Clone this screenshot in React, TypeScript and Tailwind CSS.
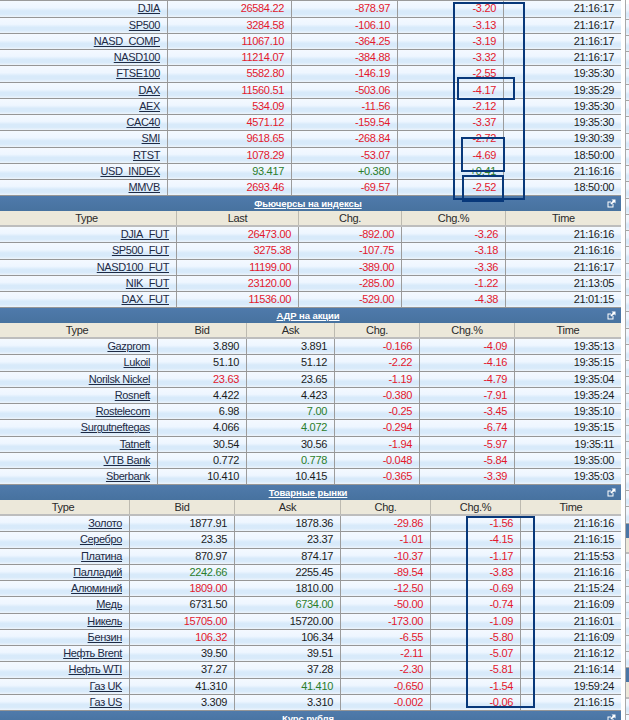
const RED = "text-[#e3182d]";
const GREEN = "text-[#2b7d2b]";
const BLACK = "text-[#1c1c1c]";

function valueClass(v: string) {
  if (v.startsWith("r:")) return RED;
  if (v.startsWith("g:")) return GREEN;
  if (v.startsWith("-")) return RED;
  if (v.startsWith("+")) return GREEN;
  return BLACK;
}
const strip = (v: string) => v.replace(/^[rg]:/, "");

const ROW_BG =
  "bg-[linear-gradient(#f4f9ff_0%,#eef6ff_42%,#d8eafa_62%,#d8eafa_82%,#edf4fb_100%)]";

function ExpandIcon() {
  return (
    <svg width="9" height="9" viewBox="0 0 9 9" className="shrink-0">
      <path d="M0.5 2.5h3.5v1H1.5v4h4V5h1v3.5h-6z" fill="#fff" />
      <path d="M4.5 0.5H8.5V4.5L7.2 3.2 4.6 5.6 3.4 4.4 5.8 1.8z" fill="#fff" />
    </svg>
  );
}

function Section({ title }: { title: string }) {
  return (
    <div className="h-[14.25px] relative flex items-center justify-center bg-[linear-gradient(#4f7aab,#47729f)] pr-[5px] pt-px">
      <a className="text-[9.5px] leading-none font-bold text-white underline tracking-[-0.08px]">
        {title}
      </a>
      <span className="absolute right-[5px] top-[2.5px]">
        <ExpandIcon />
      </span>
    </div>
  );
}

function Head({ cols, labels }: { cols: string; labels: string[] }) {
  return (
    <div className={`grid ${cols} h-[16.5px] bg-[#ece8da] border-b-2 border-[#bdbdbd]`}>
      {labels.map((l, i) => (
        <div
          key={l}
          className={`flex items-center justify-center pt-px text-[#2a2a2a] ${
            i < labels.length - 1 ? "border-r border-[#bdbab0]" : ""
          } ${i === 0 ? "pr-[3px]" : ""}`}
        >
          {l}
        </div>
      ))}
    </div>
  );
}

function Row({ cols, cells }: { cols: string; cells: string[] }) {
  return (
    <div className={`grid ${cols} h-[16.25px] ${ROW_BG} border-b border-[#969696]`}>
      {cells.map((c, i) => (
        <div
          key={i}
          className={`flex items-center justify-end pr-[7px] ${
            i < cells.length - 1 ? "border-r border-[#9c9c9c]" : ""
          } ${i === 0 ? "" : valueClass(c)}`}
        >
          {i === 0 ? (
            <a className="underline text-[#1d2a44] tracking-[-0.38px]">{c}</a>
          ) : (
            strip(c)
          )}
        </div>
      ))}
    </div>
  );
}

const indices = [
  ["DJIA", "r:26584.22", "-878.97", "-3.20", "21:16:17"],
  ["SP500", "r:3284.58", "-106.10", "-3.13", "21:16:17"],
  ["NASD_COMP", "r:11067.10", "-364.25", "-3.19", "21:16:17"],
  ["NASD100", "r:11214.07", "-384.88", "-3.32", "21:16:17"],
  ["FTSE100", "r:5582.80", "-146.19", "-2.55", "19:35:30"],
  ["DAX", "r:11560.51", "-503.06", "-4.17", "19:35:29"],
  ["AEX", "r:534.09", "-11.56", "-2.12", "19:35:30"],
  ["CAC40", "r:4571.12", "-159.54", "-3.37", "19:35:30"],
  ["SMI", "r:9618.65", "-268.84", "-2.72", "19:30:39"],
  ["RTST", "r:1078.29", "-53.07", "-4.69", "18:50:00"],
  ["USD_INDEX", "g:93.417", "+0.380", "+0.41", "21:16:16"],
  ["MMVB", "r:2693.46", "-69.57", "-2.52", "18:50:00"],
];
const futures = [
  ["DJIA_FUT", "r:26473.00", "-892.00", "-3.26", "21:16:16"],
  ["SP500_FUT", "r:3275.38", "-107.75", "-3.18", "21:16:16"],
  ["NASD100_FUT", "r:11199.00", "-389.00", "-3.36", "21:16:17"],
  ["NIK_FUT", "r:23120.00", "-285.00", "-1.22", "21:13:05"],
  ["DAX_FUT", "r:11536.00", "-529.00", "-4.38", "21:01:15"],
];
const adr = [
  ["Gazprom", "3.890", "3.891", "-0.166", "-4.09", "19:35:13"],
  ["Lukoil", "51.10", "51.12", "-2.22", "-4.16", "19:35:15"],
  ["Norilsk Nickel", "r:23.63", "23.65", "-1.19", "-4.79", "19:35:04"],
  ["Rosneft", "4.422", "4.423", "-0.380", "-7.91", "19:35:24"],
  ["Rostelecom", "6.98", "g:7.00", "-0.25", "-3.45", "19:35:10"],
  ["Surgutneftegas", "4.066", "g:4.072", "-0.294", "-6.74", "19:35:15"],
  ["Tatneft", "30.54", "30.56", "-1.94", "-5.97", "19:35:11"],
  ["VTB Bank", "0.772", "g:0.778", "-0.048", "-5.84", "19:35:00"],
  ["Sberbank", "10.410", "10.415", "-0.365", "-3.39", "19:35:03"],
];
const goods = [
  ["Золото", "1877.91", "1878.36", "-29.86", "-1.56", "21:16:16"],
  ["Серебро", "23.35", "23.37", "-1.01", "-4.15", "21:16:15"],
  ["Платина", "870.97", "874.17", "-10.37", "-1.17", "21:15:53"],
  ["Палладий", "g:2242.66", "2255.45", "-89.54", "-3.83", "21:16:16"],
  ["Алюминий", "r:1809.00", "1810.00", "-12.50", "-0.69", "21:15:24"],
  ["Медь", "6731.50", "g:6734.00", "-50.00", "-0.74", "21:16:09"],
  ["Никель", "r:15705.00", "15720.00", "-173.00", "-1.09", "21:16:01"],
  ["Бензин", "r:106.32", "106.34", "-6.55", "-5.80", "21:16:09"],
  ["Нефть Brent", "39.50", "39.51", "-2.11", "-5.07", "21:16:12"],
  ["Нефть WTI", "37.27", "37.28", "-2.30", "-5.81", "21:16:14"],
  ["Газ UK", "41.310", "g:41.410", "-0.650", "-1.54", "19:59:24"],
  ["Газ US", "3.309", "3.310", "-0.002", "-0.06", "21:16:15"],
];

const C1 = "grid-cols-[168px_124px_106px_106px_117px]";
const C2 = "grid-cols-[177px_122px_103px_104px_115px]";
const C3 = "grid-cols-[158px_89px_88px_85px_95px_106px]";
const C4 = "grid-cols-[130px_105px_106px_90px_90px_100px]";

function Mark({ className }: { className: string }) {
  return <div className={`absolute border-[#08387a] ${className}`} />;
}

function SliverRow() {
  return <div className={`h-[16.25px] ${ROW_BG} border-b border-[#a5a5a5]`} />;
}

function Sliver() {
  const fill = (n: number) => Array.from({ length: n }, (_, i) => <SliverRow key={i} />);
  return (
    <div className="ml-[4px] w-[4px] border-l border-[#a8a8a8] box-content pt-[3.5px]">
      {fill(32)}
      <div className="h-[14.25px] bg-[#4a76a6]" />
      <div className="h-[16.5px] bg-[#ece8da] border-b-2 border-[#bdbdbd]" />
      {fill(7)}
      <div className="h-[14.25px] bg-[#4a76a6]" />
      <div className="h-[16.5px] bg-[#ece8da] border-b-2 border-[#bdbdbd]" />
      {fill(2)}
    </div>
  );
}

export default function App() {
  return (
    <div className="relative w-[629px] h-[720px] overflow-hidden bg-white flex text-[11px] leading-none tracking-[-0.32px] font-['Liberation_Sans',Arial,sans-serif]">
      <div className="w-[621px] shrink-0">
        <div className="h-[1.25px] bg-[#9a9a9a]" />
        {indices.map((r) => (
          <Row key={r[0]} cols={C1} cells={r} />
        ))}
        <Section title="Фьючерсы на индексы" />
        <Head cols={C2} labels={["Type", "Last", "Chg.", "Chg.%", "Time"]} />
        {futures.map((r) => (
          <Row key={r[0]} cols={C2} cells={r} />
        ))}
        <Section title="АДР на акции" />
        <Head cols={C3} labels={["Type", "Bid", "Ask", "Chg.", "Chg.%", "Time"]} />
        {adr.map((r) => (
          <Row key={r[0]} cols={C3} cells={r} />
        ))}
        <Section title="Товарные рынки" />
        <Head cols={C4} labels={["Type", "Bid", "Ask", "Chg.", "Chg.%", "Time"]} />
        {goods.map((r) => (
          <Row key={r[0]} cols={C4} cells={r} />
        ))}
        <Section title="Курс рубля" />
      </div>
      <Sliver />
      <Mark className="left-[453px] top-[2px] w-[72px] h-[198px] border-2" />
      <Mark className="left-[457px] top-[77px] w-[58px] h-[23px] border-2" />
      <Mark className="left-[461px] top-[137px] w-[44px] h-[35px] border-2" />
      <Mark className="left-[462px] top-[175px] w-[42px] h-[27px] border-2 border-b-[3px]" />
      <Mark className="left-[466px] top-[516px] w-[69px] h-[192px] border-2" />
    </div>
  );
}
